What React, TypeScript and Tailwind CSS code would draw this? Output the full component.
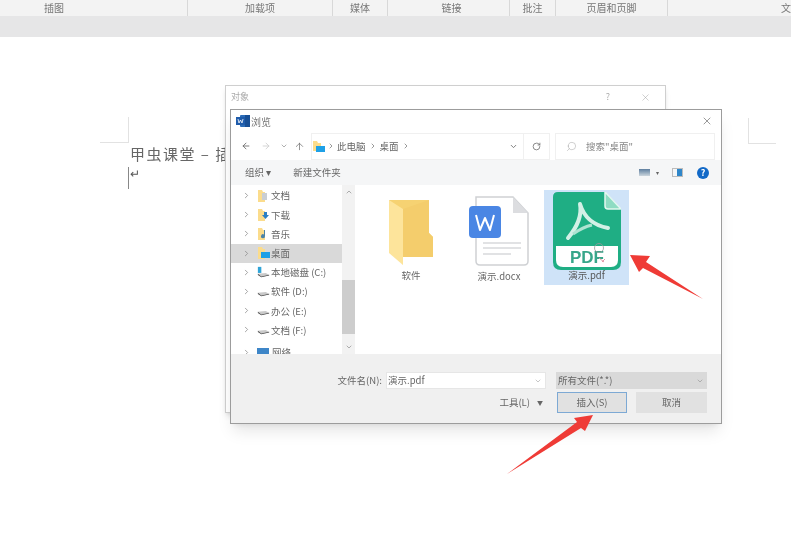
import React from 'react';
import { ArrowLeft, ArrowRight, ArrowUp, ChevronDown, ChevronRight, RotateCw, Search, X } from 'lucide-react';

const ribbonGroups = [
  { label: '插图', cls: 'w-[188px] text-left pl-[44px]' },
  { label: '加载项', cls: 'w-[145px] text-center' },
  { label: '媒体', cls: 'w-[55px] text-center' },
  { label: '链接', cls: 'w-[122px] text-center pl-[6px]' },
  { label: '批注', cls: 'w-[46px] text-center' },
  { label: '页眉和页脚', cls: 'w-[112px] text-center' },
];

type TreeItem = { label: string; icon: 'doc' | 'down' | 'music' | 'desk' | 'sys' | 'drive'; active?: boolean };

const tree: TreeItem[] = [
  { label: '文档', icon: 'doc' },
  { label: '下载', icon: 'down' },
  { label: '音乐', icon: 'music' },
  { label: '桌面', icon: 'desk', active: true },
  { label: '本地磁盘 (C:)', icon: 'sys' },
  { label: '软件 (D:)', icon: 'drive' },
  { label: '办公 (E:)', icon: 'drive' },
  { label: '文档 (F:)', icon: 'drive' },
];

const TreeIcon = ({ kind }: { kind: TreeItem['icon'] }) => {
  if (kind === 'sys' || kind === 'drive') {
    return (
      <svg width="13" height="13" viewBox="0 0 15 13" className="shrink-0">
        {kind === 'sys' && <rect x="1" y="0" width="4" height="7" fill="#2fa4d8" />}
        <path d="M1 8 L10 7 L14 9 L5 11 Z" fill="#c9c9c9" />
        <path d="M1 8 L5 11 L14 9 L14 10 L5 12 L1 9.5 Z" fill="#444" />
      </svg>
    );
  }
  return (
    <svg width="13" height="14" viewBox="0 0 13 14" className="shrink-0">
      <path d="M1 1 H5 L6 3 H8 V13 H1 Z" fill="#fbdc8c" />
      {kind === 'doc' && <path d="M5 4 H10 V11 H5 Z" fill="#c9ced3" />}
      {kind === 'down' && <path d="M7 4 H10 V7 H12 L8.5 11 L5 7 H7 Z" fill="#2b7fc4" />}
      {kind === 'music' && <path d="M8 3 V9 A2 2 0 1 1 7 7.5 V3 Z" fill="#4b83a8" />}
      {kind === 'desk' && <rect x="4" y="6" width="9" height="6" fill="#1ea0e6" />}
    </svg>
  );
};

const WordLogo = () => (
  <svg width="14" height="14" viewBox="0 0 14 14" className="shrink-0">
    <rect x="4" y="1" width="10" height="12" rx="1" fill="#2b6cb8" />
    <rect x="9" y="1" width="5" height="12" fill="#174f96" />
    <rect x="0" y="3" width="9" height="8" fill="#1f5cab" />
    <path d="M2 5 L3 9 L4.5 6 L6 9 L7 5" stroke="#fff" strokeWidth="0.8" fill="none" />
  </svg>
);

const BigFolder = () => (
  <svg width="44" height="66" viewBox="0 0 44 66">
    <path d="M0 1 H40 V34 L44 38 V58 H14 V66 Z" fill="#f6d272" />
    <path d="M0 1 L14 10 V66 L0 54 Z" fill="#fde49b" />
    <path d="M14 10 L40 1 V34 L44 38 V58 H14 Z" fill="#f4cd6c" />
  </svg>
);

const DocxIcon = () => (
  <svg width="60" height="72" viewBox="0 0 60 72">
    <path d="M7 1 H44 L59 17 V65 Q59 69 55 69 H11 Q7 69 7 65 Z" fill="#fff" stroke="#cfd1d4" strokeWidth="1.5" />
    <path d="M44 1 V17 H59 Z" fill="#dcdde0" />
    <rect x="0" y="10" width="32" height="32" rx="4" fill="#4a86e4" />
    <path d="M7 19 L11 34 L16 22 L21 34 L25 19" stroke="#fff" strokeWidth="2" fill="none" strokeLinejoin="round" />
    <path d="M14 47 H52 M14 52 H52 M14 58 H42" stroke="#c4c6c9" strokeWidth="1.2" />
  </svg>
);

const PdfIcon = () => (
  <svg width="68" height="78" viewBox="0 0 68 78">
    <path d="M5 0 H52 L68 17 V70 Q68 78 60 78 H8 Q0 78 0 70 V5 Q0 0 5 0 Z" fill="#1fae84" />
    <path d="M52 0 L68 17 H55 Q52 17 52 14 Z" fill="#8fdcc3" stroke="#e4f7f0" strokeWidth="1.5" />
    <path d="M3 54 H65 V68 Q65 75 58 75 H10 Q3 75 3 68 Z" fill="#fff" />
    <path d="M15 46 Q30 28 27 12 Q33 32 55 36" stroke="#d3f0e6" strokeWidth="4" fill="none" strokeLinecap="round" strokeLinejoin="round" />
    <path d="M20 42 Q30 35 39 33" stroke="#aee3d1" strokeWidth="3" fill="none" />
    <text x="34" y="71" textAnchor="middle" fontSize="17" fontWeight="600" fill="#37a68a" fontFamily="Liberation Sans, sans-serif">PDF</text>
    <circle cx="46" cy="56" r="4.5" fill="none" stroke="#999" strokeWidth="0.8" />
    <path d="M46 66 L51 70 M49 70 L52 67" stroke="#e39aa8" strokeWidth="1" />
  </svg>
);

export default function App() {
  return (
    <div className="relative w-[791px] h-[558px] overflow-hidden bg-white text-[#555] blur-[0.4px] font-['Noto_Sans_CJK_SC','Noto_Sans',sans-serif]">
      <div className="flex h-[16px] bg-[#f3f3f3] text-[10px] leading-[16px] text-[#777]">
        {ribbonGroups.map(g => (
          <div key={g.label} className={`${g.cls} border-r border-[#d8d8d8]`}>
            {g.label}
          </div>
        ))}
        <div className="flex-1 text-right">文</div>
      </div>
      <div className="h-[21px] bg-[#e6e6e7]" />

      <div className="mt-[80px] ml-[100px] w-[29px] h-[26px] border-r border-b border-[#e2e2e2]" />
      <div className="pl-[130px] text-[15px] leading-[22px] tracking-[1.5px] text-[#666]">甲虫课堂 – 插</div>
      <div className="ml-[128px] mt-[2px] w-px h-[22px] bg-[#888] text-[12px] leading-[12px]">
        <span className="pl-[2px]">↵</span>
      </div>

      {/* right page corner mark */}
      <div className="absolute left-[748px] top-[118px] w-[28px] h-[26px] border-l border-b border-[#e2e2e2]" />

      {/* object window behind */}
      <div className="absolute left-[225px] top-[85px] w-[441px] h-[328px] bg-white border border-[#cfcfcf] shadow-md">
        <div className="flex items-center h-[22px] pl-[5px] pr-[14px] text-[9px] text-[#aaa]">
          <span className="flex-1">对象</span>
          <span className="mr-[30px]">?</span>
          <X size={11} strokeWidth={1} className="text-[#999]" />
        </div>
      </div>

      {/* browse window */}
      <div className="absolute left-[230px] top-[109px] w-[492px] h-[315px] flex flex-col bg-white border border-[#9c9c9c] shadow-lg">
        <div className="flex items-center h-[22px] shrink-0 pl-[5px] pr-[8px] gap-[1px] text-[10px]">
          <WordLogo />
          <span className="flex-1 text-[#777]">浏览</span>
          <X size={12} strokeWidth={1.2} className="text-[#555]" />
        </div>

        <div className="flex items-center h-[28px] shrink-0 pl-[10px] pr-[5px] text-[9.5px] text-[#666]">
          <ArrowLeft size={10} className="text-[#666]" />
          <ArrowRight size={10} className="ml-[10px] text-[#ccc]" />
          <ChevronDown size={8} className="ml-[9px] text-[#888]" />
          <ArrowUp size={11} strokeWidth={1.5} className="ml-[6px] text-[#666]" />
          <div className="flex items-center ml-[6px] w-[213px] h-[27px] border border-[#f0f0f0] pl-[1px] pr-[5px]">
            <svg width="12" height="11" viewBox="0 0 12 11" className="shrink-0">
              <path d="M0 0 H4 L5 2 H8 V10 H0 Z" fill="#fbdc8c" />
              <rect x="3" y="5" width="9" height="6" fill="#1ea0e6" />
            </svg>
            <ChevronRight size={8} className="ml-[2px]" />
            <span className="ml-[2px]">此电脑</span>
            <ChevronRight size={8} className="ml-[3px]" />
            <span className="ml-[3px]">桌面</span>
            <ChevronRight size={8} className="ml-[3px]" />
            <ChevronDown size={9} strokeWidth={2.5} className="ml-auto text-[#777]" />
          </div>
          <div className="flex items-center justify-center w-[26px] h-[27px] border-y border-r border-[#f0f0f0]">
            <RotateCw size={9} strokeWidth={2} className="text-[#666]" />
          </div>
          <div className="flex items-center ml-[5px] w-[160px] h-[27px] border border-[#f0f0f0] pl-[10px] text-[#888]">
            <Search size={11} strokeWidth={1} className="-scale-x-100 text-[#999]" />
            <span className="ml-[9px]">搜索"桌面"</span>
          </div>
        </div>

        <div className="flex items-center h-[25px] shrink-0 bg-[#f5f6f7] pl-[14px] pr-[12px] text-[9.5px] text-[#666]">
          <span>组织 ▾</span>
          <span className="ml-[22px]">新建文件夹</span>
          <div className="w-[11px] h-[7px] ml-auto bg-gradient-to-b from-[#5f7f9f] to-[#ccd6dd]" />
          <span className="ml-[6px] text-[6px]">▾</span>
          <div className="flex justify-end ml-[13px] w-[11px] h-[9px] border border-[#bbb]">
            <div className="w-[5px] bg-[#2f86c9]" />
          </div>
          <div className="flex items-center justify-center ml-[14px] w-[12px] h-[12px] rounded-full bg-[#1269c7] text-[9px] font-bold text-white">?</div>
        </div>

        <div className="flex h-[169px] shrink-0 overflow-hidden">
          <div className="w-[111px] pt-[1px] overflow-hidden text-[9.5px] text-[#666]">
            {tree.map(item => (
              <div key={item.label} className={`flex items-center h-[19.2px] pl-[11px] ${item.active ? 'bg-[#d9d9d9]' : ''}`}>
                <ChevronRight size={9} className="mr-[6px] text-[#888] shrink-0" />
                <TreeIcon kind={item.icon} />
                <span className="ml-[1px] whitespace-nowrap">{item.label}</span>
              </div>
            ))}
            <div className="flex items-center h-[19.2px] pl-[11px] mt-[3px]">
              <ChevronRight size={9} className="mr-[6px] text-[#888]" />
              <span className="w-[12px] h-[8px] bg-[#3e86c8]" />
              <span className="ml-[3px]">网络</span>
            </div>
          </div>

          <div className="flex flex-col items-center w-[13px] shrink-0 bg-[#f2f2f2]">
            <ChevronDown size={8} className="rotate-180 mt-[3px] text-[#888]" />
            <div className="w-full h-[54px] mt-[84px] bg-[#cdcdcd]" />
            <ChevronDown size={8} className="mt-[9px] text-[#888]" />
          </div>

          <div className="flex flex-1 pt-[5px] text-[9.5px] text-[#666]">
            <div className="flex flex-col items-center ml-[25px] w-[62px] pt-[9px]">
              <BigFolder />
              <span className="mt-[3px]">软件</span>
            </div>
            <div className="flex flex-col items-center ml-[25px] w-[64px] pt-[6px]">
              <DocxIcon />
              <span className="mt-[1px]">演示.docx</span>
            </div>
            <div className="flex flex-col items-center ml-[13px] w-[85px] h-[95px] pt-[2px] bg-[#cfe3f8]">
              <PdfIcon />
              <span className="mt-[-2px] text-[#555]">演示.pdf</span>
            </div>
          </div>
        </div>

        <div className="flex flex-col flex-1 bg-[#f0f0f0] pt-[18px] pr-[14px] text-[9.5px] text-[#666]">
          <div className="flex items-center justify-end h-[17px]">
            <span className="mr-[4px]">文件名(N):</span>
            <div className="flex items-center justify-between w-[160px] h-[17px] bg-white border border-[#e6e6e6] pl-[1px] pr-[3px]">
              <span>演示.pdf</span>
              <ChevronDown size={8} className="text-[#aaa]" />
            </div>
            <div className="flex items-center justify-between ml-[10px] w-[151px] h-[17px] bg-[#d9d9d9] pl-[2px] pr-[3px]">
              <span>所有文件(*.*)</span>
              <ChevronDown size={8} className="text-[#999]" />
            </div>
          </div>
          <div className="flex items-center justify-end mt-[3px] h-[21px]">
            <span>工具(L)</span>
            <span className="ml-[7px] mr-[14px] text-[6px]">▼</span>
            <div className="flex items-center justify-center w-[70px] h-[21px] bg-[#e1e1e1] border border-[#7da9d4]">插入(S)</div>
            <div className="flex items-center justify-center ml-[9px] w-[71px] h-[21px] bg-[#e1e1e1]">取消</div>
          </div>
        </div>
      </div>

      {/* annotation arrows */}
      <svg viewBox="0 0 74 48" className="absolute left-[630px] top-[254px] w-[74px] h-[48px]">
        <polygon points="0,1 20,2 16,8 73,45 13,14 9,18" fill="#ef3b36" />
      </svg>
      <svg viewBox="0 0 88 61" className="absolute left-[506px] top-[414px] w-[88px] h-[61px]">
        <polygon points="87,1 68,4 71,8 1,60 75,14 79,17" fill="#ef3b36" />
      </svg>
    </div>
  );
}
